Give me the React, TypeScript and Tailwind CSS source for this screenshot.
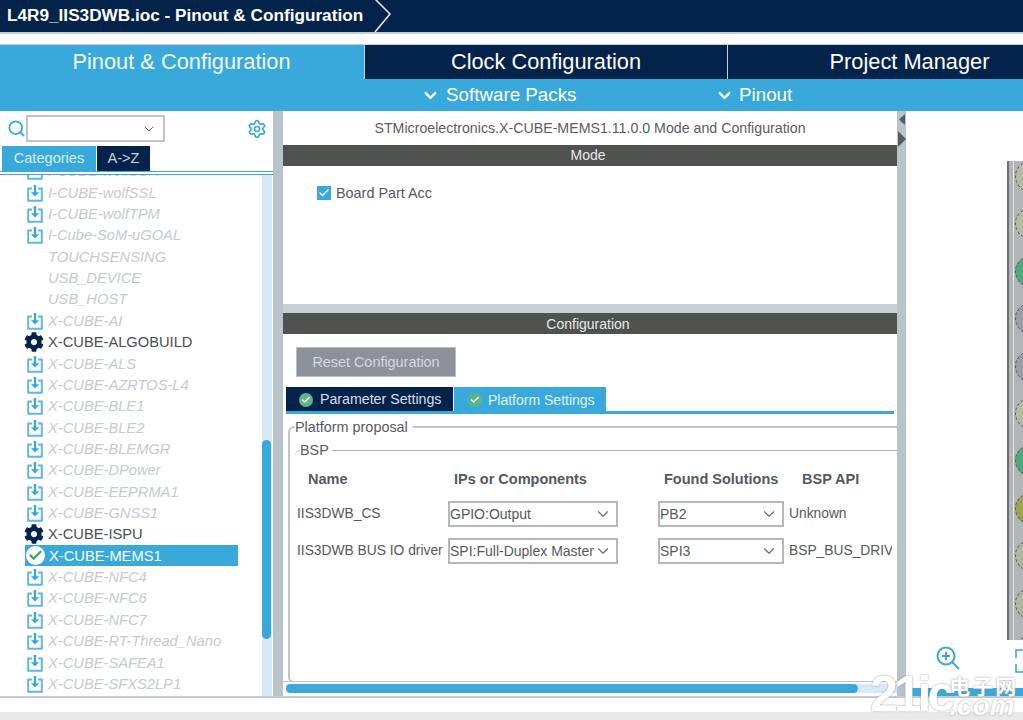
import React from "react";
import { ChevronDown, Search, Settings, Check } from "lucide-react";
import { FaCog } from "react-icons/fa";

type Kind = "dl" | "none" | "gear" | "sel";
const rows: [string, Kind][] = [
  ["I-CUBE-wolfSSH", "dl"],
  ["I-CUBE-wolfSSL", "dl"],
  ["I-CUBE-wolfTPM", "dl"],
  ["I-Cube-SoM-uGOAL", "dl"],
  ["TOUCHSENSING", "none"],
  ["USB_DEVICE", "none"],
  ["USB_HOST", "none"],
  ["X-CUBE-AI", "dl"],
  ["X-CUBE-ALGOBUILD", "gear"],
  ["X-CUBE-ALS", "dl"],
  ["X-CUBE-AZRTOS-L4", "dl"],
  ["X-CUBE-BLE1", "dl"],
  ["X-CUBE-BLE2", "dl"],
  ["X-CUBE-BLEMGR", "dl"],
  ["X-CUBE-DPower", "dl"],
  ["X-CUBE-EEPRMA1", "dl"],
  ["X-CUBE-GNSS1", "dl"],
  ["X-CUBE-ISPU", "gear"],
  ["X-CUBE-MEMS1", "sel"],
  ["X-CUBE-NFC4", "dl"],
  ["X-CUBE-NFC6", "dl"],
  ["X-CUBE-NFC7", "dl"],
  ["X-CUBE-RT-Thread_Nano", "dl"],
  ["X-CUBE-SAFEA1", "dl"],
  ["X-CUBE-SFXS2LP1", "dl"],
];

const pins = ["#b9baa6", "#b9baa6", "#4fa97a", "#9a9fa6", "#9a9fa6", "#b9baa6", "#4fa97a", "#9da34f", "#b4b5a0", "#b4b5a0", "#b4b5a0"];

function DownloadIcon() {
  return (
    <svg width="16" height="18" viewBox="0 0 16 18" fill="none" className="shrink-0">
      <path d="M5 4.5H1.2V16.8H14.8V4.5H11" stroke="#5fb8e3" strokeWidth="2" />
      <path d="M8 1V10" stroke="#39a9dc" strokeWidth="2.4" />
      <path d="M3.8 8.2L8 12.6L12.2 8.2Z" fill="#39a9dc" />
    </svg>
  );
}

function Row({ name, kind }: { name: string; kind: Kind }) {
  if (kind === "sel") {
    return (
      <div className="flex h-[21.36px] w-[213px] items-center bg-[#39a9dc] pl-[1px] text-[14.7px] text-white">
        <span className="mr-[4px] flex h-[19px] w-[19px] shrink-0 items-center justify-center rounded-full bg-white">
          <Check size={15} strokeWidth={3.5} className="text-[#3aa655]" />
        </span>
        {name}
      </div>
    );
  }
  return (
    <div className="flex h-[21.36px] items-center pl-[2px]">
      <span className="mr-[5px] flex w-[16px] shrink-0 justify-center">
        {kind === "dl" && <DownloadIcon />}
        {kind === "gear" && <FaCog size={20} className="-ml-[3px] shrink-0 text-[#03234b]" />}
      </span>
      {kind === "gear" ? (
        <span className="text-[14.7px] text-[#4a4f55]">{name}</span>
      ) : (
        <span className="text-[14.7px] italic text-[#c5cbd1]">{name}</span>
      )}
    </div>
  );
}

function Select({ value, w }: { value: string; w: string }) {
  return (
    <div className={`flex ${w} h-[26px] shrink-0 items-center justify-between border-2 border-[#b4b8bc] pr-[4px] text-[14px] text-[#55595e]`}>
      <span className="whitespace-nowrap">{value}</span>
      <ChevronDown size={18} strokeWidth={1.5} className="shrink-0 text-[#6a6e73]" />
    </div>
  );
}

function GreenDot() {
  return (
    <span className="flex h-[14px] w-[14px] shrink-0 items-center justify-center rounded-full bg-[#5cb585]">
      <Check size={10} strokeWidth={3.5} className="text-white" />
    </span>
  );
}

export default function App() {
  return (
    <div
      className="relative flex h-[720px] w-[1023px] flex-col overflow-hidden bg-white"
      style={{ fontFamily: '"Liberation Sans", Arial, sans-serif' }}
    >
      {/* breadcrumb */}
      <div className="flex h-[34px] shrink-0 items-center border-b-2 border-[#c4ccd4] bg-[#03234b] pl-[7px]">
        <span className="text-[17.2px] font-bold text-white">L4R9_IIS3DWB.ioc - Pinout &amp; Configuration</span>
        <svg width="22" height="34" viewBox="0 0 22 34" fill="none" className="ml-[10px]">
          <path d="M2 0L17 15L2 33" stroke="#e8edf2" strokeWidth="1.5" />
        </svg>
      </div>
      <div className="h-[10px] shrink-0" />

      {/* main tabs */}
      <div className="flex h-[35px] shrink-0 border-t border-[#c4ccd4] bg-[#03234b] text-[21.8px] text-white">
        <div className="flex w-[364px] items-center justify-center bg-[#39a9dc] pr-[1px] text-[#f2f9fd]">Pinout &amp; Configuration</div>
        <div className="flex w-[363px] items-center justify-center border-l border-[#c4ccd4]">Clock Configuration</div>
        <div className="flex flex-1 items-center justify-center border-l border-[#c4ccd4] pl-[68px]">Project Manager</div>
      </div>

      {/* sub bar */}
      <div className="flex h-[32px] shrink-0 items-center bg-[#39a9dc] text-[18.8px] text-white">
        <div className="ml-[421px] flex w-[294px] items-center gap-[6px]">
          <ChevronDown size={19} strokeWidth={3} />
          Software Packs
        </div>
        <div className="flex items-center gap-[5px]">
          <ChevronDown size={19} strokeWidth={3} />
          Pinout
        </div>
      </div>

      {/* body */}
      <div className="flex h-[587px] shrink-0 border-b-2 border-[#c3cbd0]">
        {/* left */}
        <div className="flex w-[273px] shrink-0 flex-col overflow-hidden">
          <div className="flex h-[35px] shrink-0 items-center pl-[7px]">
            <Search size={19} strokeWidth={2.25} className="shrink-0 text-[#39a9dc]" />
            <div className="flex h-[27px] w-[139px] items-center justify-end border-2 border-[#c0c4c8] pr-[6px]">
              <ChevronDown size={16} strokeWidth={1.5} className="text-[#666]" />
            </div>
            <Settings size={20} strokeWidth={2} className="ml-[82px] text-[#39a9dc]" />
          </div>
          <div className="flex h-[25px] shrink-0 pl-[2px] text-[14.6px]">
            <div className="flex w-[94px] items-center justify-center bg-[#39a9dc] text-[#d5eef9]">Categories</div>
            <div className="ml-[1px] flex w-[53px] items-center justify-center bg-[#03234b] text-[#c9d2dc]">A-&gt;Z</div>
          </div>
          <div className="h-[4px] shrink-0 border-y border-[#39a9dc]" />
          <div className="flex min-h-0 flex-1 overflow-hidden">
            <div className="min-w-0 flex-1 overflow-hidden">
              <div className="-mt-[14.4px] pl-[25px]">
                {rows.map(([n, k]) => (
                  <Row key={n} name={n} kind={k} />
                ))}
              </div>
            </div>
            <div className="mr-[1px] w-[10px] shrink-0 bg-[#d7e8f6] pt-[265px]">
              <div className="h-[199px] w-[9px] rounded-full bg-[#39a9dc]" />
            </div>
          </div>
        </div>

        {/* splitter */}
        <div className="w-[10px] shrink-0 bg-[#b9c4ca]" />

        {/* center */}
        <div className="flex w-[614px] shrink-0 flex-col overflow-hidden text-[#55595e]">
          <div className="flex h-[34px] shrink-0 items-center justify-center pt-[1px] text-[14.2px] text-[#5a5e63]">
            STMicroelectronics.X-CUBE-MEMS1.11.0.0 Mode and Configuration
          </div>
          <div className="flex h-[21px] shrink-0 items-center justify-center bg-[#505250] pr-[4px] text-[14px] text-[#e8e8e8]">Mode</div>
          <div className="flex h-[138px] shrink-0 items-start pl-[34px] pt-[20px] text-[14.4px]">
            <span className="mr-[5px] flex h-[14px] w-[14px] items-center justify-center bg-[#39a9dc]">
              <Check size={12} strokeWidth={3} className="text-white" />
            </span>
            <span className="-mt-[3px]">Board Part Acc</span>
          </div>
          <div className="h-[9px] shrink-0 bg-[#c6d0d5]" />
          <div className="flex h-[21px] shrink-0 items-center justify-center bg-[#505250] pr-[4px] pt-[2px] text-[14px] text-[#e8e8e8]">Configuration</div>
          <div className="ml-[13px] mt-[13px] flex h-[30px] w-[160px] shrink-0 items-center justify-center self-start border border-[#b9bdc1] bg-[#8d9299] pt-[1px] text-[14.4px] text-[#d5d8dc]">
            Reset Configuration
          </div>
          <div className="ml-[3px] mt-[10px] flex h-[24px] shrink-0 text-[14px]">
            <div className="flex w-[167px] items-center bg-[#03234b] pl-[13px] pt-[2px] text-[#d9dfe6]">
              <GreenDot />
              <span className="ml-[7px] text-[14.2px]">Parameter Settings</span>
            </div>
            <div className="ml-[1px] flex w-[152px] items-center bg-[#39a9dc] pl-[14px] pt-[2px] text-[#e3f3fb]">
              <GreenDot />
              <span className="ml-[6px]">Platform Settings</span>
            </div>
          </div>
          <div className="ml-[3px] mr-[3px] h-[3px] shrink-0 bg-[#39a9dc]" />

          <div className="min-h-0 flex-1 overflow-hidden pl-[5px] pt-[4px]">
            <fieldset className="h-[265px] w-[640px] rounded-tl-[6px] rounded-bl-[6px] border-2 border-[#c0c4c8] pl-[5px]">
              <legend className="pr-[5px] text-[14.4px] leading-[18px]">Platform proposal</legend>
              <fieldset className="mt-[5px] w-[630px] rounded-tl-[6px] border-t border-[#a9adb2] pl-[5px]">
                <legend className="pr-[3px] text-[14.4px] leading-[18px]">BSP</legend>
                <div className="mt-[11px] flex h-[20px] items-center text-[14.5px] font-bold">
                  <span className="ml-[8px] w-[146px]">Name</span>
                  <span className="w-[210px]">IPs or Components</span>
                  <span className="w-[138px]">Found Solutions</span>
                  <span>BSP API</span>
                </div>
                <div className="mt-[11px] flex h-[26px] items-center text-[13.8px]">
                  <span className="-ml-[3px] w-[151px] whitespace-nowrap">IIS3DWB_CS</span>
                  <Select value="GPIO:Output" w="w-[170px]" />
                  <span className="w-[40px]" />
                  <Select value="PB2" w="w-[126px]" />
                  <span className="ml-[5px] whitespace-nowrap">Unknown</span>
                </div>
                <div className="mt-[11px] flex h-[26px] items-center text-[13.8px]">
                  <span className="-ml-[3px] w-[151px] whitespace-nowrap">IIS3DWB BUS IO driver</span>
                  <Select value="SPI:Full-Duplex Master" w="w-[170px]" />
                  <span className="w-[40px]" />
                  <Select value="SPI3" w="w-[126px]" />
                  <span className="ml-[5px] w-[103px] overflow-hidden whitespace-nowrap">BSP_BUS_DRIVER</span>
                </div>
              </fieldset>
            </fieldset>
          </div>
          <div className="h-[15px] shrink-0 border-t border-[#c0c4c8] pt-[2px]">
            <div className="ml-[3px] h-[9px] bg-[#d7e8f6]">
              <div className="h-[9px] w-[572px] rounded-full bg-[#39a9dc]" />
            </div>
          </div>
        </div>

        {/* splitter 2 */}
        <div className="flex w-[9px] shrink-0 flex-col items-center bg-[#b9c4ca] pt-[3px]">
          <svg width="8" height="34" viewBox="0 0 8 34">
            <path d="M7 0V11L1 5.5Z" fill="#555a5e" />
            <path d="M0 17V33L8 25Z" fill="#555a5e" />
          </svg>
        </div>

        {/* right */}
        <div className="flex min-w-0 flex-1 flex-col overflow-hidden">
          <div className="flex h-[529px] shrink-0 justify-end pt-[50px]">
            <div className="flex h-[479px] w-[16px] overflow-hidden border-l-2 border-[#6b6e72] bg-[#b2b5b8]">
              <div className="ml-[4px] w-[1px] shrink-0 bg-[#e6e8ea]" />
              <div className="ml-[1px] flex flex-col gap-[16.4px]">
                {pins.map((c, i) => (
                  <span
                    key={i}
                    className="h-[31px] w-[31px] shrink-0 rounded-full border border-dashed border-[#55595e]"
                    style={{ background: c }}
                  />
                ))}
              </div>
            </div>
          </div>
          <div className="flex h-[48px] shrink-0 items-start pt-[6px]">
            <svg width="26" height="26" viewBox="0 0 26 26" fill="none" className="ml-[29px] shrink-0">
              <circle cx="11" cy="10" r="8.5" stroke="#39a9dc" strokeWidth="2" />
              <path d="M7 10H15M11 6V14" stroke="#39a9dc" strokeWidth="2" />
              <path d="M17 16L24 23" stroke="#39a9dc" strokeWidth="2" />
            </svg>
            <svg width="10" height="24" viewBox="0 0 10 24" fill="none" className="ml-[54px] mt-[3px] shrink-0">
              <path d="M10 1H1V9M1 15V23H10" stroke="#39a9dc" strokeWidth="1.6" />
            </svg>
          </div>
          <div className="h-[8px] shrink-0 bg-[#39a9dc]" />
        </div>
      </div>

      {/* bottom strip */}
      <div className="h-[14px] shrink-0 bg-white" />
      <div className="flex-1 bg-[#e9e9e9]" />

      {/* watermark */}
      <div className="pointer-events-none absolute left-[870px] top-[669px] flex w-[150px] items-start whitespace-nowrap text-white [text-shadow:0_0_2px_#8a9096]">
        <span className="text-[50px] font-bold leading-[50px] tracking-[-4px]">21ic</span>
        <div className="ml-[-2px] flex flex-col pt-[5px]">
          <span
            className="text-[21px] font-bold leading-[22px] tracking-[2px]"
            style={{ fontFamily: '"Noto Sans CJK SC", sans-serif' }}
          >
            电子网
          </span>
          <span className="text-[28px] font-bold italic leading-[20px]">.com</span>
        </div>
      </div>
    </div>
  );
}
